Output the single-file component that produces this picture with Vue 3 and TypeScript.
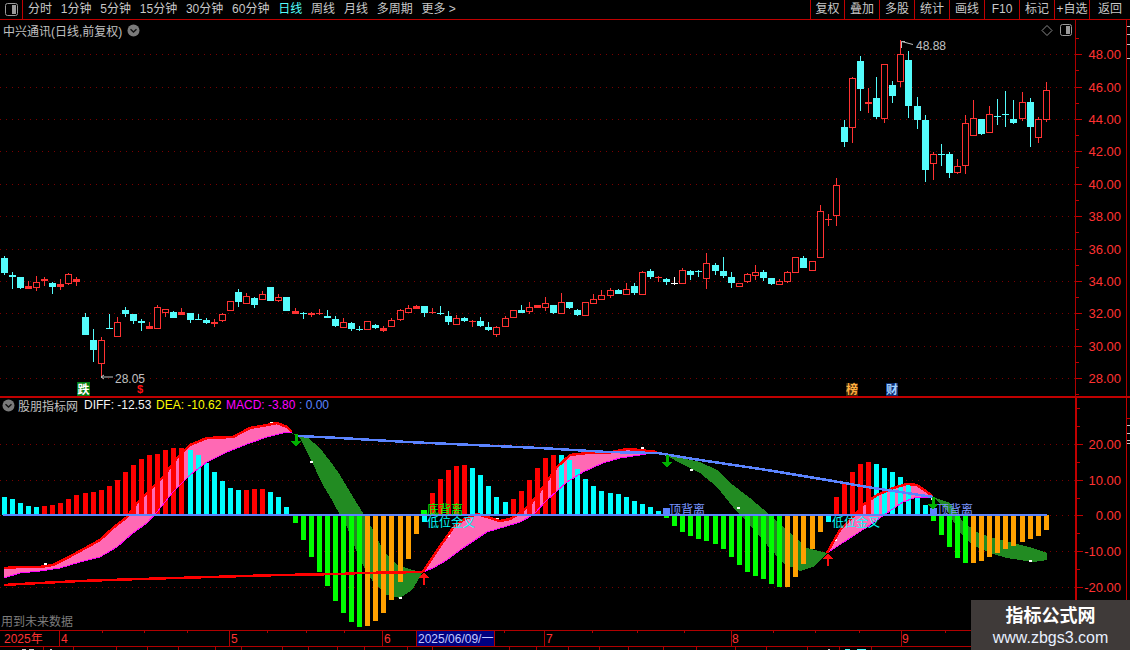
<script setup lang="ts">
const tabs: string[] = ['分时', '1分钟', '5分钟', '15分钟', '30分钟', '60分钟', '日线', '周线', '月线', '多周期', '更多 >']
const rightButtons: { label: string; width: number }[] = [
  { label: '复权', width: 34 }, { label: '叠加', width: 35 }, { label: '多股', width: 35 },
  { label: '统计', width: 35 }, { label: '画线', width: 35 }, { label: 'F10', width: 35 },
  { label: '标记', width: 35 }, { label: '+自选', width: 35 }, { label: '返回', width: 41 },
]

const cxOf = (i: number): number => Math.floor(4.3 + 8.077 * i)

// high, body top, body bottom, low, kind (0 rising, 1 falling, 2 flat)
const candleData: number[][] = [
  [256,258,273,275,1],[272,275,277,289,1],[277,277,288,289,1],[281,286,289,289,0],[276,282,288,291,0],
  [277,279,281,286,0],[282,283,287,294,1],[279,284,287,290,0],[273,274,284,285,0],[277,279,282,286,0],
  [313,317,335,335,1],[329,340,350,362,1],[337,340,364,377,0],[314,328,329,329,1],[317,322,337,337,0],
  [307,310,314,317,1],[314,314,321,324,1],[319,321,323,331,1],[322,326,329,329,0],[305,307,329,329,0],
  [309,309,313,317,0],[311,312,318,318,1],[308,312,315,315,0],[313,313,320,323,1],[314,319,320,320,1],
  [318,320,323,324,1],[319,322,324,327,0],[313,314,321,322,0],[301,301,311,311,0],[289,292,302,307,1],
  [293,296,304,304,0],[297,298,305,308,1],[291,294,300,300,0],[287,287,301,301,1],[294,297,301,302,0],
  [297,297,311,311,1],[308,311,314,314,0],[312,313,314,319,1],[312,313,315,317,0],[309,313,314,315,0],
  [310,316,318,318,1],[316,319,326,327,1],[318,322,328,328,0],[322,323,329,331,1],[326,329,330,331,1],
  [321,321,330,330,0],[324,325,328,329,1],[326,328,331,332,0],[318,320,327,327,0],[309,310,320,321,0],
  [305,308,313,313,0],[305,306,309,309,0],[306,306,313,317,1],[308,312,313,314,0],[306,313,314,315,1],
  [311,316,322,325,1],[315,318,325,325,0],[317,318,321,322,1],[320,321,322,327,0],[317,321,326,327,1],
  [322,327,330,331,1],[326,327,335,337,0],[316,318,327,327,0],[310,310,318,318,0],[305,310,313,313,1],
  [302,307,312,314,0],[305,305,308,308,0],[297,303,308,311,0],[305,305,313,314,1],[293,302,314,314,0],
  [302,302,308,309,1],[309,310,315,316,1],[302,302,316,316,0],[294,299,304,304,0],[290,295,300,300,0],
  [288,290,296,298,0],[289,290,294,294,1],[283,289,295,295,0],[283,286,293,295,1],[271,272,295,295,0],
  [269,271,277,279,1],[276,277,278,282,0],[278,279,282,285,1],[277,283,284,285,2],[268,270,284,284,0],
  [270,271,275,280,1],[270,271,272,277,1],[253,263,279,289,0],[263,265,271,275,1],[257,271,276,278,1],
  [272,277,283,288,1],[283,283,287,287,0],[273,274,282,283,0],[265,272,276,280,0],[270,272,278,281,1],
  [278,278,284,285,1],[279,281,285,285,0],[271,272,282,283,0],[257,257,273,273,0],[256,258,268,268,1],
  [261,261,271,271,0],[205,211,258,258,0],[214,219,220,226,0],[178,185,216,226,0],[120,127,142,147,1],
  [77,78,128,143,0],[56,61,89,111,1],[88,102,104,113,0],[77,98,117,119,1],[64,64,119,123,0],
  [81,85,96,103,1],[40,54,82,87,0],[51,60,106,118,1],[97,106,120,129,1],[115,120,170,182,1],
  [152,154,164,180,0],[144,154,155,166,1],[152,154,173,178,1],[159,166,173,174,0],[115,123,166,174,0],
  [100,118,136,136,0],[119,119,134,135,1],[106,114,133,133,0],[99,116,117,125,1],[91,114,115,127,1],
  [100,119,123,124,1],[92,102,119,121,0],[98,102,127,147,1],[117,119,138,143,0],[82,90,120,122,0],
]

const candleColor = ['#ff3232', '#54fcfc', '#ffffff']
const candles = candleData.map((c, i) => {
  const [h, t, b, l, kind] = c
  const cx = cxOf(i)
  const height = Math.max(b - t, 1)
  return { key: i, cx, h, t, b, l, height, color: candleColor[kind], hollow: kind === 0 && height > 3 }
})

const priceGrid: { y: number; label: string }[] = [
  { y: 54, label: '48.00' }, { y: 87, label: '46.00' }, { y: 119, label: '44.00' }, { y: 151, label: '42.00' },
  { y: 184, label: '40.00' }, { y: 216, label: '38.00' }, { y: 249, label: '36.00' }, { y: 281, label: '34.00' },
  { y: 313, label: '32.00' }, { y: 346, label: '30.00' }, { y: 378, label: '28.00' },
]
const priceMinor: number[] = priceGrid.map((g) => g.y + 16).concat(38)

const macdGrid: { y: number; label: string }[] = [
  { y: 444, label: '20.00' }, { y: 480, label: '10.00' }, { y: 515, label: '0.00' },
  { y: 551, label: '-10.00' }, { y: 587, label: '-20.00' },
]
const macdMinor: number[] = [408, 426, 462, 498, 533, 569, 605]

// Histogram: [first index, colour, y origin of the values, values]
const C = '#00ffff', R = '#ff0000', G = '#00ff00', O = '#ffa000'
const barRuns: [number, string, number, number[]][] = [
  [0, C, 395, [306,312,324,333,336]],
  [5, R, 395, [333,330,324,312,300,294,291,285,273,255,231,210,192,180,177,165,159,159]],
  [23, C, 395, [165,180,204,231,258,279,285]],
  [30, R, 395, [285,282,282]],
  [33, C, 395, [291,306,336]],
  [36, G, 395, [384,435,486,531,573,618]],
  [42, G, 420, [579,606,621]],
  [45, O, 420, [618,603,579,540,486,417,342]],
  [52, C, 420, [306]],
  [53, R, 420, [219,177,150,138,135]],
  [58, C, 420, [144,165,198,231,246]],
  [63, R, 420, [237,213,180,144,114,105]],
  [69, C, 420, [105,120,147,177,198,213,219,222,231,243,252,261,273]],
  [82, G, 420, [294,318,336,348,357,363,372,387,411,435,456,468,477,492,501]],
  [97, O, 420, [501,471,432,387,336]],
  [102, C, 420, [306]],
  [103, R, 420, [231,189,156,132,126]],
  [108, C, 420, [132,144,156,171,189,231,255]],
  [115, G, 420, [303,345,381,414,429]],
  [120, O, 420, [429,423,411,399,387,378,366,357,348,330]],
]
const ZERO = 515
const bars = barRuns.flatMap(([start, color, origin, values]) =>
  values.map((v, k) => {
    const y = origin + v / 3
    const top = Math.min(y, ZERO)
    return { key: start + k, x: cxOf(start + k) - 2, y: top, h: Math.abs(y - ZERO), color }
  }),
)

type P = [number, number]
const pts = (list: P[]): string => list.map((p) => p.join(',')).join(' ')
const band = (up: P[], low: P[]): string => pts(up.concat([...low].reverse()))

const pink1Up: P[] = [[4,568],[20,567],[40,567],[53,565],[67,558],[80,551],[100,540],[113,528],[127,517],[137,503],[150,490],[163,477],[177,458],[190,445],[207,438],[233,437],[250,428],[267,425],[277,423],[287,427],[292,432]]
const pink1Low: P[] = [[4,578],[20,573],[40,571],[60,568],[80,562],[100,557],[117,547],[133,533],[147,523],[157,512],[173,492],[190,475],[207,462],[227,452],[250,443],[267,437],[283,433],[292,432]]
const pink2Up: P[] = [[423,572],[433,557],[443,542],[453,528],[463,520],[477,514],[487,517],[500,521],[510,519],[520,513],[530,505],[543,487],[557,467],[570,455],[587,453],[607,453],[627,449],[640,450],[657,452]]
const pink2Low: P[] = [[423,572],[433,568],[447,560],[463,548],[487,532],[507,526],[520,522],[533,515],[547,500],[567,482],[583,472],[603,463],[620,458],[640,455],[657,452]]
const pink3Up: P[] = [[827,553],[840,530],[853,517],[863,505],[877,495],[893,488],[907,484],[917,485],[927,492],[933,497]]
const pink3Low: P[] = [[827,553],[847,540],[867,527],[887,513],[903,502],[917,497],[933,497]]

const green1Up: P[] = [[291,433],[307,437],[320,448],[333,465],[340,475],[350,492],[363,513],[373,530],[383,550],[397,565],[412,570],[423,572]]
const green1Low: P[] = [[291,433],[300,438],[310,458],[323,485],[333,502],[340,515],[347,527],[360,560],[373,582],[387,595],[400,598],[412,590],[423,572]]
const green2Up: P[] = [[660,452],[680,458],[700,462],[717,470],[733,485],[750,498],[770,515],[787,530],[807,548],[827,553]]
const green2Low: P[] = [[660,452],[680,463],[700,473],[717,487],[733,507],[750,525],[767,545],[783,563],[800,571],[813,567],[827,553]]
const green3Up: P[] = [[933,497],[950,503],[963,522],[977,532],[993,538],[1017,544],[1033,548],[1047,553]]
const green3Low: P[] = [[933,497],[947,510],[960,533],[973,545],[990,553],[1007,558],[1033,562],[1047,560]]

const greenBands: string[] = [band(green1Up, green1Low), band(green2Up, green2Low), band(green3Up, green3Low)]
const pinkBands: string[] = [band(pink1Up, pink1Low), band(pink2Up, pink2Low), band(pink3Up, pink3Low)]
const redEdges: string[] = [pts(pink1Up), pts(pink2Up), pts(pink3Up)]
const magentaEdges: string[] = [pts(pink1Low), pts(pink2Low), pts(pink3Low)]

const blueLine: string = pts([[298,436],[340,438],[407,442],[473,445],[540,448],[607,452],[657,453],[700,460],[767,470],[833,481],[867,487],[900,492],[933,497]])
const redLine: string = pts([[4,585],[20,584],[80,581],[140,579],[210,577],[280,575],[340,574],[360,573],[423,572]])

const whiteBits: P[] = [[44,563],[91,543],[222,436],[270,422],[310,461],[399,597],[447,535],[496,518],[593,452],[641,447],[690,469],[737,507],[834,539],[931,498],[1029,560]]

const downArrows: P[] = [[296,434],[667,455],[933,497]]
const upArrows: P[] = [[424,585],[828,566]]

const labels: { x: number; y: number; text: string; color: string }[] = [
  { x: 427, y: 514, text: '底背离', color: '#00ff00' },
  { x: 427, y: 527, text: '低位金叉', color: '#00ffff' },
  { x: 669, y: 514, text: '顶背离', color: '#7a96ff' },
  { x: 832, y: 527, text: '低位金叉', color: '#00ffff' },
  { x: 937, y: 514, text: '顶背离', color: '#7a96ff' },
]

const axisDividers: number[] = [59, 229, 382, 416, 494, 544, 731, 901]
const axisTicks: number[] = [102, 144, 187, 267, 306, 344, 504, 592, 637, 684, 773, 815, 859, 945, 988, 1030]
const axisMonths: { x: number; label: string }[] = [
  { x: 61, label: '4' }, { x: 231, label: '5' }, { x: 384, label: '6' },
  { x: 546, label: '7' }, { x: 732, label: '8' }, { x: 902, label: '9' },
]
const lowerTicks: number[] = [43, 73, 116, 147, 178, 215, 241, 282, 308, 337, 364, 407, 432, 509, 536, 568, 599, 628, 663, 696, 735, 766, 807, 839, 871]
const edgeTicks: number[] = [26, 34, 44, 58, 425, 433, 440, 443]
</script>

<template>
  <div class="screen">
    <header class="toolbar">
      <div class="panel-cell">
        <svg width="13" height="13" viewBox="0 0 13 13">
          <rect x="0.5" y="0.5" width="12" height="12" rx="2" fill="none" stroke="#9a9a9a" />
          <rect x="7" y="2" width="4" height="9" fill="#9a9a9a" />
        </svg>
      </div>
      <nav class="tabs">
        <span v-for="t in tabs" :key="t" class="tab" :class="{ active: t === '日线' }">{{ t }}</span>
      </nav>
      <div class="actions">
        <span v-for="b in rightButtons" :key="b.label" class="action" :style="{ width: b.width + 'px' }">{{ b.label }}</span>
      </div>
    </header>

    <section class="pane main-pane">
      <div class="pane-title">
        <span>中兴通讯(日线,前复权)</span>
        <svg width="13" height="13" viewBox="0 0 13 13">
          <circle cx="6.5" cy="6.5" r="6" fill="#7a7a7a" />
          <path d="M3.5 5.2 6.5 8 9.5 5.2" fill="none" stroke="#111" stroke-width="1.4" />
        </svg>
      </div>
      <svg class="chart" width="1130" height="376" viewBox="0 20 1130 376" shape-rendering="crispEdges">
        <line v-for="g in priceGrid" :key="g.y" x1="0" x2="1075" :y1="g.y + 0.5" :y2="g.y + 0.5" class="grid" />
        <line v-for="g in priceGrid" :key="'t' + g.y" x1="1075" x2="1082" :y1="g.y + 0.5" :y2="g.y + 0.5" class="axis-line" />
        <line v-for="y in priceMinor" :key="'m' + y" x1="1075" x2="1079" :y1="y + 0.5" :y2="y + 0.5" class="axis-line" />
        <text v-for="g in priceGrid" :key="'l' + g.y" x="1121" :y="g.y + 5" text-anchor="end" class="axis-label">{{ g.label }}</text>
        <rect x="1075" y="20" width="1" height="376" fill="#b00000" />
        <rect x="1126" y="20" width="1" height="376" fill="#b00000" />
        <rect v-for="y in edgeTicks.slice(0, 4)" :key="'e' + y" x="1127" :y="y" width="3" height="1" fill="#c8c8c8" />

        <g v-for="c in candles" :key="c.key">
          <rect :x="c.cx" :y="c.h" width="1" :height="Math.max(c.l - c.h, 1)" :fill="c.color" />
          <template v-if="c.hollow">
            <rect :x="c.cx - 3" :y="c.t" width="7" :height="c.height" fill="#000" />
            <rect :x="c.cx - 2.5" :y="c.t + 0.5" width="6" :height="c.height - 1" fill="none" :stroke="c.color" />
          </template>
          <rect v-else :x="c.cx - 3" :y="c.t" width="7" :height="c.height" :fill="c.color" />
        </g>

        <g shape-rendering="auto">
          <path d="M101 377H113M101 377l3-2M101 377l3 2" fill="none" stroke="#c0c0c0" />
          <text x="115" y="383" class="price-note">28.05</text>
          <path d="M901.5 48V41.5H905M901.5 41.5 913 44.5" fill="none" stroke="#c0c0c0" />
          <text x="916" y="50" class="price-note">48.88</text>
          <path d="M1047 25.5 1052 30.5 1047 35.5 1042 30.5Z" fill="none" stroke="#8a8a8a" />
          <rect x="1060.5" y="24.5" width="11" height="11" rx="2" fill="none" stroke="#9a9a9a" />
          <rect x="1066" y="26" width="4" height="8" fill="#9a9a9a" />
        </g>

        <rect x="77" y="382" width="13" height="14" fill="#007a10" />
        <text x="77.5" y="394" class="tag tag-white">跌</text>
        <text x="137" y="393" class="dollar">$</text>
        <rect x="846" y="383" width="12" height="13" fill="#3a2408" />
        <text x="846" y="394" class="tag tag-gold">榜</text>
        <rect x="886" y="383" width="12" height="13" fill="#0a2a6a" />
        <text x="886" y="394" class="tag tag-blue">财</text>
      </svg>
    </section>

    <div class="divider"></div>

    <section class="pane sub-pane">
      <div class="pane-title sub-title">
        <svg width="13" height="13" viewBox="0 0 13 13">
          <circle cx="6.5" cy="6.5" r="6" fill="#7a7a7a" />
          <path d="M3.5 5.2 6.5 8 9.5 5.2" fill="none" stroke="#111" stroke-width="1.4" />
        </svg>
        <span class="indicator-name">股朋指标网</span>
        <span class="v-diff">DIFF: -12.53</span>
        <span class="v-dea">DEA: -10.62</span>
        <span class="v-macd">MACD: -3.80</span>
        <span class="v-zero">: 0.00</span>
      </div>
      <svg class="chart" width="1130" height="232" viewBox="0 398 1130 232" shape-rendering="crispEdges">
        <line v-for="g in macdGrid" :key="g.y" x1="0" x2="1075" :y1="g.y + 0.5" :y2="g.y + 0.5" class="grid" />
        <line v-for="g in macdGrid" :key="'t' + g.y" x1="1075" x2="1083" :y1="g.y + 0.5" :y2="g.y + 0.5" class="axis-line" />
        <line v-for="y in macdMinor" :key="'m' + y" x1="1075" x2="1080" :y1="y + 0.5" :y2="y + 0.5" class="axis-line" />
        <text v-for="g in macdGrid" :key="'l' + g.y" x="1121" :y="g.y + 5" text-anchor="end" class="axis-label">{{ g.label }}</text>
        <rect x="1075" y="398" width="2" height="232" fill="#c00000" />
        <rect x="1126" y="398" width="1" height="232" fill="#c00000" />
        <rect x="1126" y="418" width="4" height="1" fill="#c00000" />
        <rect v-for="y in edgeTicks.slice(4)" :key="'e' + y" x="1127" :y="y" width="3" height="1" fill="#c8c8c8" />

        <polygon v-for="(p, i) in greenBands" :key="'g' + i" :points="p" fill="#228b22" />
        <polygon v-for="(p, i) in pinkBands" :key="'p' + i" :points="p" fill="#ff69b4" />
        <rect v-for="w in whiteBits" :key="'w' + w[0]" :x="w[0]" :y="w[1]" width="3" height="2" fill="#fff" />
        <rect v-for="b in bars" :key="b.key" :x="b.x" :y="b.y" width="5" :height="b.h" :fill="b.color" />
        <rect x="421" y="510" width="6" height="5" fill="#00ff00" />
        <rect x="663" y="508" width="7" height="7" fill="#5b84ff" />
        <rect x="930" y="508" width="7" height="7" fill="#5b84ff" />

        <polyline v-for="(p, i) in magentaEdges" :key="'m' + i" :points="p" fill="none" stroke="#ff00ff" stroke-width="1" />
        <polyline v-for="(p, i) in redEdges" :key="'r' + i" :points="p" fill="none" stroke="#ff0000" stroke-width="2.5" />
        <polyline :points="redLine" fill="none" stroke="#ff0000" stroke-width="2.5" />
        <polyline :points="blueLine" fill="none" stroke="#5b84ff" stroke-width="2.5" />
        <rect x="3" y="514" width="1044" height="2" fill="#5b84ff" />

        <g v-for="a in downArrows" :key="'d' + a[0]" :transform="`translate(${a[0]} ${a[1]})`">
          <path d="M-1.5 0H1.5V7H5L0 13-5 7H-1.5Z" fill="#00b000" />
        </g>
        <g v-for="a in upArrows" :key="'u' + a[0]" :transform="`translate(${a[0]} ${a[1]})`">
          <path d="M-1 0H1V-7H5L0 -13-5 -7H-1Z" fill="#ff1010" />
        </g>
        <text v-for="l in labels" :key="l.x + l.text" :x="l.x" :y="l.y" class="signal" :fill="l.color">{{ l.text }}</text>
        <text x="1" y="626" class="future">用到未来数据</text>
      </svg>
    </section>

    <footer class="time-axis">
      <svg class="chart" width="1130" height="20" viewBox="0 630 1130 20" shape-rendering="crispEdges">
        <rect x="0" y="630" width="1130" height="1" fill="#b00000" />
        <rect x="0" y="646" width="1130" height="1" fill="#b00000" />
        <rect x="416" y="631" width="78" height="15" fill="#000080" />
        <rect v-for="x in axisDividers" :key="'d' + x" :x="x" y="630" width="1" height="17" fill="#b00000" />
        <rect v-for="x in axisTicks" :key="'t' + x" :x="x" y="631" width="1" height="2" fill="#b00000" />
        <rect v-for="x in lowerTicks" :key="'b' + x" :x="x" y="647" width="1" height="3" fill="#b00000" />
        <rect x="1126" y="630" width="1" height="20" fill="#b00000" />
        <rect x="22" y="649" width="4" height="1" fill="#c8c8c8" />
        <rect x="29" y="649" width="5" height="1" fill="#c8c8c8" />
        <rect x="50" y="649" width="2" height="1" fill="#c8c8c8" />
        <rect x="828" y="649" width="2" height="1" fill="#c8c8c8" />
        <rect x="845" y="649" width="5" height="1" fill="#54fcfc" />
        <rect x="857" y="649" width="9" height="1" fill="#54fcfc" />
        <text x="4" y="643" class="month">2025年</text>
        <text v-for="m in axisMonths" :key="m.label" :x="m.x" y="643" class="month">{{ m.label }}</text>
        <text x="418" y="643" class="cursor-date">2025/06/09/一</text>
      </svg>
    </footer>

    <aside class="watermark">
      <div class="wm-title">指标公式网</div>
      <div class="wm-url">www.zbgs3.com</div>
    </aside>
  </div>
</template>

<style scoped>
.screen {
  position: relative;
  display: flex;
  flex-direction: column;
  width: 1130px;
  height: 650px;
  overflow: hidden;
  background: #000;
  color: #c8c8c8;
  font-family: "Liberation Sans", "Noto Sans CJK SC", sans-serif;
  font-size: 12px;
}
.toolbar {
  display: flex;
  align-items: stretch;
  flex: none;
  height: 19px;
  border-bottom: 1px solid #c00000;
  line-height: 19px;
}
.panel-cell {
  display: flex;
  align-items: center;
  justify-content: center;
  width: 22px;
  padding-left: 0;
  border-right: 1px solid #c00000;
}
.tabs {
  display: flex;
  gap: 8.8px;
  padding-left: 5px;
}
.tab {
  white-space: pre;
}
.tab.active {
  color: #54fcfc;
}
.actions {
  display: flex;
  margin-left: auto;
}
.action {
  box-sizing: border-box;
  border-left: 1px solid #c00000;
  text-align: center;
}
.pane {
  position: relative;
  flex: none;
}
.main-pane {
  height: 376px;
}
.chart {
  display: block;
}
.pane-title {
  position: absolute;
  top: 2px;
  left: 3px;
  display: flex;
  align-items: center;
  gap: 5px;
  height: 16px;
  color: #c0c0c0;
  white-space: nowrap;
}
.sub-title {
  top: -1px;
  left: 2px;
  gap: 0;
}
.indicator-name {
  margin-left: 3px;
  width: 66px;
}
.v-diff {
  color: #f4f4f4;
  width: 72px;
}
.v-dea {
  color: #ffff00;
  width: 70px;
}
.v-macd {
  color: #ff00ff;
  width: 73px;
}
.v-zero {
  color: #5b84ff;
}
.divider {
  flex: none;
  height: 2px;
  background: #c00000;
}
.sub-pane {
  height: 232px;
}
.time-axis {
  flex: none;
  height: 20px;
}
.grid {
  stroke: #7a0000;
  stroke-width: 1;
  stroke-dasharray: 1 5;
}
.axis-line {
  stroke: #c00000;
}
.axis-label {
  fill: #ff3232;
  font-size: 13px;
}
.price-note {
  fill: #c0c0c0;
  font-size: 12px;
}
.tag {
  font-size: 12px;
  font-weight: 700;
}
.tag-white {
  fill: #ffffff;
}
.tag-gold {
  fill: #ffb040;
}
.tag-blue {
  fill: #9fd0ff;
}
.dollar {
  fill: #ff1010;
  font-size: 11px;
  font-weight: 700;
}
.signal {
  font-size: 12px;
}
.future {
  fill: #7c7c7c;
  font-size: 12px;
}
.month {
  fill: #ff3232;
  font-size: 12px;
}
.cursor-date {
  fill: #c0c8ff;
  font-size: 12px;
}
.watermark {
  position: absolute;
  right: 0;
  bottom: 0;
  box-sizing: border-box;
  width: 159px;
  height: 50px;
  padding-top: 6px;
  background: #3f3a39;
  color: #ffffff;
  text-align: center;
}
.wm-title {
  font-size: 18px;
  font-weight: 700;
  line-height: 21px;
}
.wm-url {
  margin-top: 1px;
  color: #e8f0ff;
  font-size: 16px;
  line-height: 20px;
}
</style>
